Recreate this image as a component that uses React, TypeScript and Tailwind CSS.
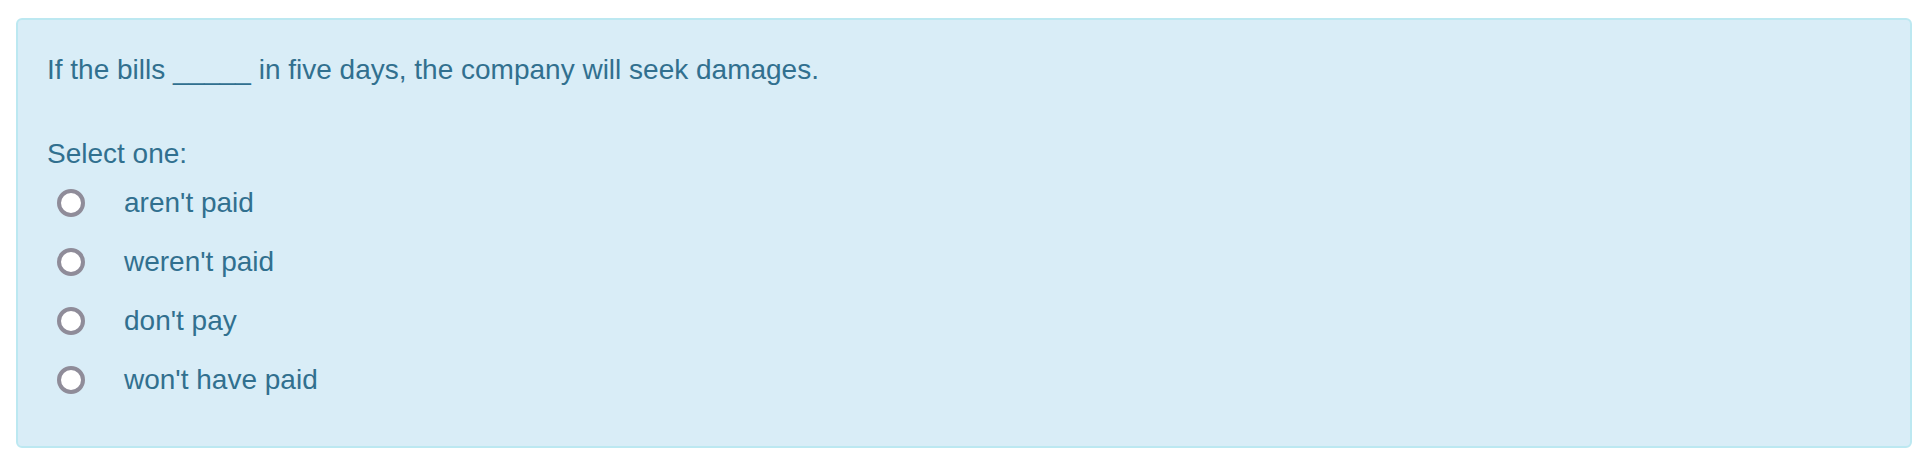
import React from 'react';

const OPTIONS = ["aren't paid", "weren't paid", "don't pay", "won't have paid"];

function Radio() {
  return (
    <span className="ml-[10px] box-border block h-[28px] w-[28px] shrink-0 rounded-full border-[4px] border-[#8f8c99] bg-white" />
  );
}

export default function App() {
  return (
    <div className="bg-white pt-[18px] pl-[16px]" style={{ fontFamily: '"Liberation Sans", Arial, sans-serif' }}>
      <div className="box-border w-[1896px] h-[430px] rounded-[6px] border-2 border-[#bce8f1] bg-[#d9edf7] px-[29px] pt-[30px] text-[28px] leading-[40px] text-[#31708f]">
        <p>If the bills _____ in five days, the company will seek damages.</p>
        <p className="mt-[44px]">Select one:</p>
        <div className="mt-[9px] flex flex-col gap-[19px]">
          {OPTIONS.map((opt) => (
            <label key={opt} className="flex items-center">
              <Radio />
              <span className="ml-[39px]">{opt}</span>
            </label>
          ))}
        </div>
      </div>
    </div>
  );
}
